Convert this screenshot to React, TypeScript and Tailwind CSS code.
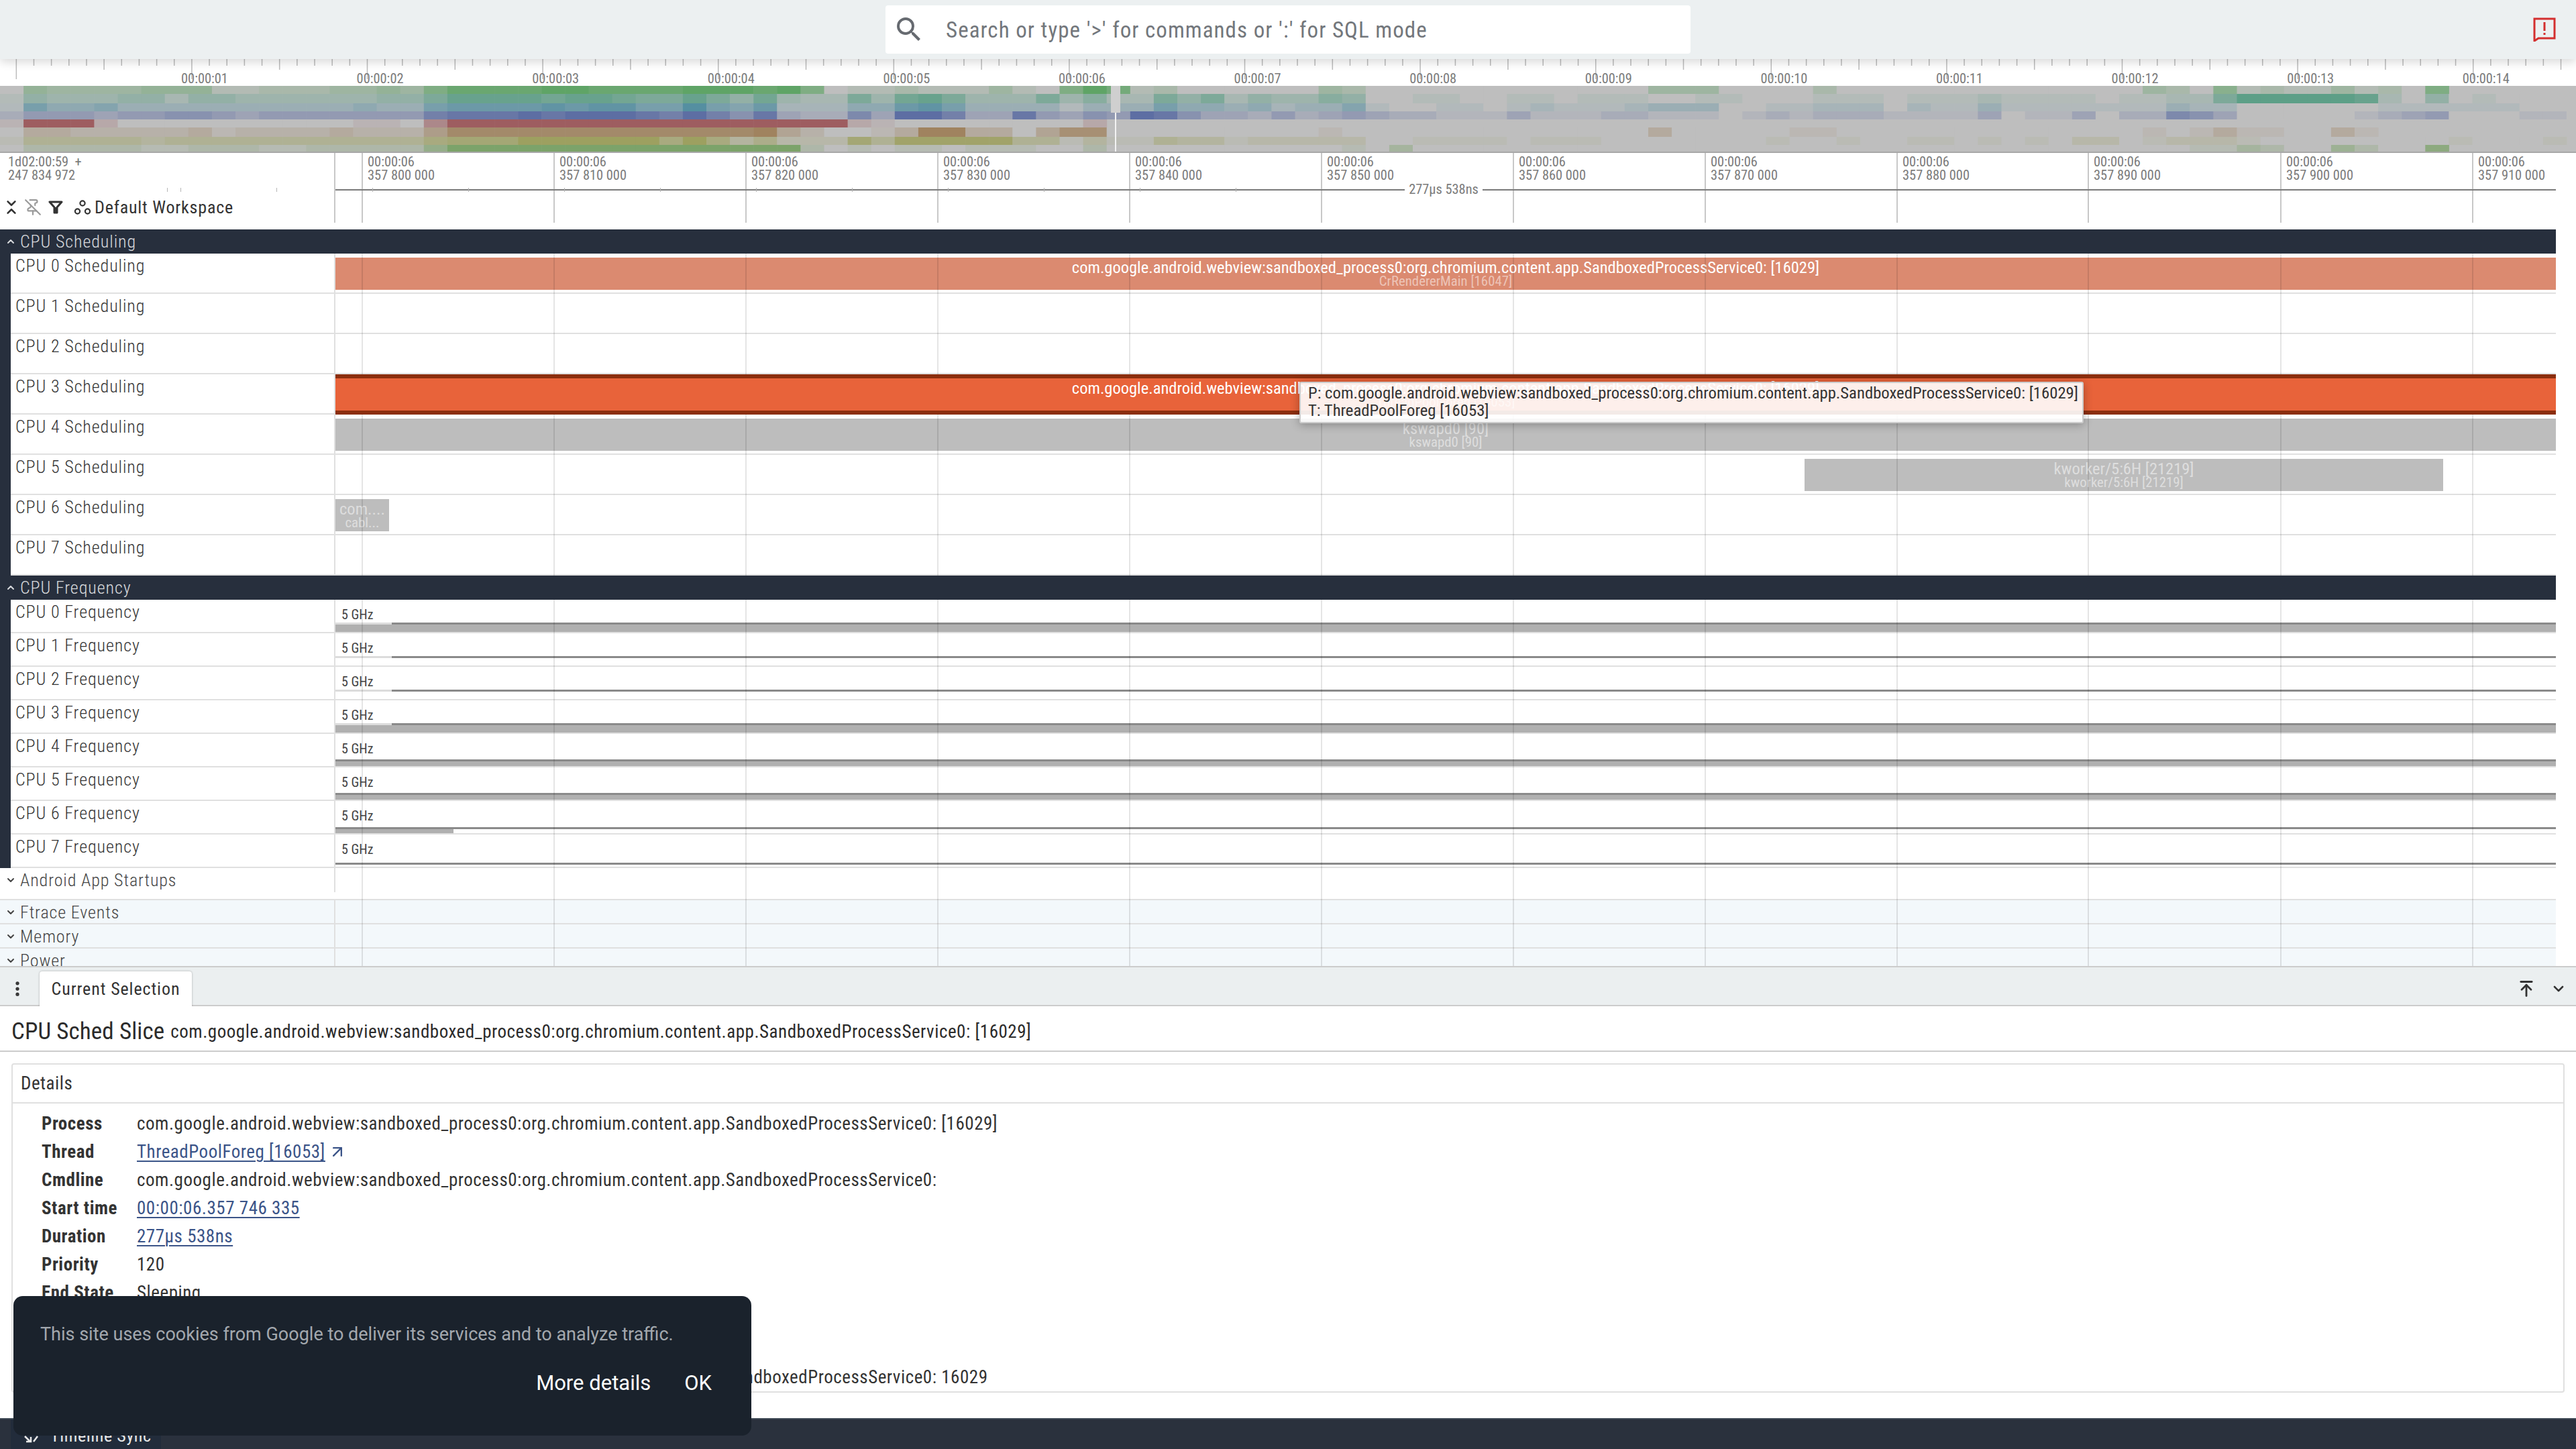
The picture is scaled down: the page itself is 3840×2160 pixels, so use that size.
import { ArrowUpRight, ArrowUpToLine, ChevronDown, ChevronUp, ChevronsDownUp, EllipsisVertical, PinOff } from "lucide-react";

const FONT = "font-['Roboto','Liberation_Sans',sans-serif]";
const z = (n: number) => "0".repeat(n);

// overview heat map: one digit per 35px column, 0 = grey, 9 = full colour
const HEAT: { color: number[]; y: number; h: number; data: string }[] = [
  { color: [95, 164, 102], y: 0, h: 12, data: "0" + "4" + "3333" + "444" + "11" + "222" + "33" + "43" + "6" + "888899888899989" + "601" + "1211131069712" + z(6) + "32" + z(12) + "3330" + z(3) + "2" + z(13) + "320" + "5121131206" },
  { color: [93, 159, 135], y: 12, h: 14, data: "1" + "4333" + "44" + "2" + "44333333" + "44" + "6" + "88887887" + "66" + "8" + "6" + "4" + "7" + "322" + "6" + "378633363522646243354" + "0011001101110011" + "000" + "111" + "0111211110" + "1122" + "6" + "99999" + "8204010000" },
  { color: [85, 143, 161], y: 26, h: 12, data: "1" + "6" + "44" + "5" + "3333" + "3333" + "33" + "43" + "3" + "6" + "77778788" + "66" + "9" + "6" + "5" + "7" + "222" + "4" + "478633331333644342335" + "1001101" + "2" + "111" + "2" + "333" + "0" + "011" + "222" + "0" + "2" + "11" + "3" + "1111111" + "322" + z(6) + "1111" + "1100" + "0" },
  { color: [93, 110, 163], y: 38, h: 12, data: "2444344554344444447888989998" + "79758322" + "6" + "399733843549853324234" + "3" + "22" + "111" + "3" + "111" + "22" + "111" + "0" + "121222" + "1111" + "30" + "11" + "30" + "22" + "653" + z(5) + "1234" + "000" + "110" },
  { color: [158, 93, 96], y: 50, h: 12, data: "1" + "999" + "2" + z(10) + "110" + "5" + "9".repeat(17) + "2" + "1" + z(8) + "2" },
  { color: [160, 131, 95], y: 62, h: 14, data: "0" + "33222223122223222" + "5" + "8".repeat(13) + "9" + "42" + "00" + "1399330477" + z(9) + "10" + z(12) + "3" + z(5) + "11" + z(13) + "1013" + "11" + "00" + "31" },
  { color: [157, 160, 96], y: 76, h: 12, data: "1" + "44444344444444444" + "6" + "777" + "999999" + "69635" + "222" + "7" + "488888441311433122222" + "001111011100" + "0000" + "0100100110101" + "0" + "220" + "1" + "222" + "1" + z(8) + "1" + "000" + "1" },
  { color: [116, 160, 95], y: 88, h: 12, data: "0" + "22222112221122222" + "5" + "8".repeat(15) + "201" + "0110111002" + z(10) + "103" + z(33) + "1132" + "00" + "42" + "00" + "6" },
];

const mix = (c: number[], v: number) => {
  const t = v / 9;
  return `rgb(${c.map((x) => Math.round(190 + (x - 190) * t)).join(",")})`;
};

const GRID = [539, 825, 1111, 1397, 1683, 1969, 2255, 2541, 2827, 3112, 3399, 3685];
const TIMES = ["800", "810", "820", "830", "840", "850", "860", "870", "880", "890", "900", "910"];
const MINI_TICKS = [555, 698, 841, 984, 1127, 1270, 1413, 1556, 1699, 1842];

function TopBar() {
  return (
    <div className="relative z-20 flex h-[88px] items-center justify-center bg-[#ecf0f1] shadow-[0_4px_14px_rgba(0,0,0,0.16)]">
      <div className="flex h-[72px] w-[1200px] items-center rounded-[4px] bg-white pl-[11px]">
        <svg width="48" height="48" viewBox="0 0 24 24" fill="#666a70">
          <path d="M15.5 14h-.79l-.28-.27A6.471 6.471 0 0 0 16 9.5 6.5 6.5 0 1 0 9.5 16c1.61 0 3.09-.59 4.23-1.57l.27.28v.79l5 4.99L20.49 19l-4.99-5zm-6 0C7.01 14 5 11.99 5 9.5S7.01 5 9.5 5 14 7.01 14 9.5 11.99 14 9.5 14z" />
        </svg>
        <span className="ml-[31px] pt-[2px] text-[33px] tracking-[1.05px] text-[#73777c]">Search or type '&gt;' for commands or ':' for SQL mode</span>
      </div>
      <svg className="absolute right-[30px] top-[26px]" width="34" height="36" viewBox="0 0 34 36" fill="none">
        <path d="M2 2h30v29H8l-6 4z" stroke="#d32f2f" strokeWidth="3" />
        <path d="M17 7v13M17 23v3" stroke="#d32f2f" strokeWidth="3" />
      </svg>
    </div>
  );
}

function TimeRuler() {
  const ticks = Array.from({ length: 148 }, (_, i) => i);
  return (
    <div className="relative h-[40px] bg-white">
      <svg width="3840" height="40" className="block">
        {ticks.map((i) => {
          const x = 259 - 26.16 * 9 + 26.16 * i;
          const h = i % 10 === 0 ? 30 : i % 5 === 0 ? 16 : 10;
          return <rect key={i} x={x} y={0} width={1.5} height={h} fill="#bdbdbd" />;
        })}
        {Array.from({ length: 14 }, (_, i) => (
          <text key={i} x={270 + 261.6 * i} y={36} fontSize="20.4" fill="#7b7b7b" fontFamily="Roboto, sans-serif">
            {`00:00:${String(i + 1).padStart(2, "0")}`}
          </text>
        ))}
      </svg>
    </div>
  );
}

function Overview() {
  return (
    <div className="h-[100px] bg-[#bebebe]">
      <svg width="3840" height="100" className="block">
        {HEAT.map((row) =>
          Array.from(row.data).map((d, i) => (
            <rect key={`${row.y}-${i}`} x={i * 35.1} y={row.y} width={35.6} height={row.h} fill={mix(row.color, Number(d))} />
          ))
        )}
        <rect x="1656" y="0" width="14" height="40" fill="#cfcfcf" />
        <rect x="1662" y="40" width="2" height="60" fill="#f2f2f2" />
        <rect x="0" y="98" width="3840" height="2" fill="#a8a8a8" />
      </svg>
    </div>
  );
}

function TimelineHeader() {
  return (
    <div className="relative flex h-[104px] bg-white">
      <div className="flex w-[500px] shrink-0 flex-col justify-between border-r-2 border-[#c8c8c8]">
        <div className="pl-[12px] pt-[3px] text-[20.4px] leading-[20px] text-[#7b7b7b]">
          <div>1d02:00:59 &nbsp;+</div>
          <div>247 834 972</div>
        </div>
        <div className="mb-[7px] flex h-[32px] items-center pl-[4px] text-[#333]">
          <ChevronsDownUp className="size-[26px]" strokeWidth={2.4} />
          <PinOff className="ml-[6px] size-[26px] text-[#9a9a9a]" strokeWidth={2} />
          <svg className="ml-[10px]" width="22" height="22" viewBox="0 0 22 22">
            <path d="M2 3h18l-7 8v8h-4v-8z" fill="none" stroke="#333" strokeWidth="3" strokeLinejoin="round" />
            <path d="M9 11h4v8H9z" fill="#333" />
          </svg>
          <svg className="ml-[16px]" width="26" height="24" viewBox="0 0 26 24" fill="none" stroke="#333" strokeWidth="2.2">
            <circle cx="13" cy="6" r="3.6" />
            <circle cx="5.5" cy="18" r="3.6" />
            <circle cx="20.5" cy="18" r="3.6" />
          </svg>
          <span className="ml-[5px] text-[26px] tracking-[0.8px]">Default Workspace</span>
        </div>
      </div>
      <div className="relative flex-1">
        {GRID.map((x, i) => (
          <div key={x} className="absolute bottom-0 top-0 w-[2px] bg-[#c8c8c8]" style={{ left: x - 500 }}>
            <div className="absolute left-[9px] top-[3px] whitespace-nowrap text-[20.4px] leading-[20px] text-[#7b7b7b]">
              <div>00:00:06</div>
              <div>357 {TIMES[i]} 000</div>
            </div>
          </div>
        ))}
        <div className="absolute left-0 right-[30px] top-[54px] h-[2px] bg-[#7a7a7a]" />
        {MINI_TICKS.map((x) => (
          <div key={x} className="absolute top-[52px] h-[6px] w-[1px] bg-[#b5b5b5]" style={{ left: x - 500 }} />
        ))}
        <div className="absolute left-[1594px] top-[44px] w-[116px] bg-white text-center text-[20.4px] leading-[20px] text-[#7b7b7b]">277µs 538ns</div>
      </div>
      <div className="absolute left-[249px] top-[52px] h-[6px] w-[1px] bg-[#b5b5b5]" />
      <div className="absolute left-[269px] top-[52px] h-[6px] w-[1px] bg-[#b5b5b5]" />
      <div className="absolute left-[412px] top-[52px] h-[6px] w-[1px] bg-[#b5b5b5]" />
    </div>
  );
}

function GroupHeader({ title }: { title: string }) {
  return (
    <div className="relative z-10 flex h-[36px] items-center bg-[#272f3d] pl-[8px] text-[26px] font-light tracking-[0.9px] text-[#d8dadd]">
      <ChevronUp className="size-[16px]" strokeWidth={3} />
      <span className="ml-[6px]">{title}</span>
    </div>
  );
}

function Track({ title, height, children }: { title: string; height: string; children?: React.ReactNode }) {
  return (
    <div className={`flex ${height} border-b-2 border-[#e0e0e0] bg-white`}>
      <div className="w-[484px] shrink-0 border-r-2 border-[#e0e0e0] pl-[7px] pt-[3px] text-[26px] font-light leading-[30px] tracking-[0.9px] text-[#333]">{title}</div>
      <div className="relative flex-1">{children}</div>
    </div>
  );
}

function Slice({ left, width, bg, title, sub, titleColor = "text-white", subColor = "text-white/50" }: { left: number; width: number; bg: string; title: string; sub: string; titleColor?: string; subColor?: string }) {
  return (
    <div className={`absolute top-[6px] h-[48px] overflow-hidden text-center ${bg}`} style={{ left, width }}>
      <div className={`pt-[4px] text-[24.5px] leading-[21px] ${titleColor}`}>{title}</div>
      <div className={`text-[20.8px] leading-[21px] ${subColor}`}>{sub}</div>
    </div>
  );
}

function FreqTrack({ n, lineY, fill, fillWidth, lineLeft = 84 }: { n: number; lineY: number; fill?: boolean; fillWidth?: number; lineLeft?: number }) {
  return (
    <Track title={`CPU ${n} Frequency`} height="h-[50px]">
      <div className="absolute left-[9px] top-[11px] text-[20px] leading-[22px] text-[#444]">5 GHz</div>
      <div className="absolute left-0 h-[3px] bg-[#dcdcdc]" style={{ top: lineY, width: lineLeft }} />
      <div className="absolute right-0 h-[3px] bg-[#8a8a8a]" style={{ top: lineY, left: lineLeft }} />
      {fill && <div className="absolute bottom-0 left-0 bg-[#b0b0b0]" style={{ top: lineY + 3, width: fillWidth ?? "100%" }} />}
    </Track>
  );
}

function Tracks() {
  return (
    <div className="relative mt-[10px] h-[1098px] w-[3810px] overflow-hidden">
      <GroupHeader title="CPU Scheduling" />
      <div className="border-l-[16px] border-[#272f3d]">
        <Track title="CPU 0 Scheduling" height="h-[60px]">
          <Slice left={0} width={3310} bg="bg-[#db8a70]" title="com.google.android.webview:sandboxed_process0:org.chromium.content.app.SandboxedProcessService0: [16029]" sub="CrRendererMain [16047]" />
        </Track>
        <Track title="CPU 1 Scheduling" height="h-[60px]" />
        <Track title="CPU 2 Scheduling" height="h-[60px]" />
        <Track title="CPU 3 Scheduling" height="h-[60px]">
          <div className="absolute inset-x-0 top-0 z-10 h-[60px] overflow-hidden border-y-[6px] border-[#8b2e0e] bg-[#e8633a] text-center">
            <div className="pt-[4px] text-[24.5px] leading-[21px] text-white">com.google.android.webview:sandboxed_process0:org.chromium.content.app.SandboxedProcessService0: [16029]</div>
            <div className="text-[20.8px] leading-[21px] text-white/50">ThreadPoolForeg [16053]</div>
          </div>
        </Track>
        <Track title="CPU 4 Scheduling" height="h-[60px]">
          <Slice left={0} width={3310} bg="bg-[#bdbdbd]" title="kswapd0 [90]" sub="kswapd0 [90]" titleColor="text-white/50" />
        </Track>
        <Track title="CPU 5 Scheduling" height="h-[60px]">
          <Slice left={2190} width={952} bg="bg-[#bdbdbd]" title="kworker/5:6H [21219]" sub="kworker/5:6H [21219]" titleColor="text-white/50" />
        </Track>
        <Track title="CPU 6 Scheduling" height="h-[60px]">
          <Slice left={0} width={80} bg="bg-[#bdbdbd]" title="com...." sub="cabl..." titleColor="text-white/50" />
        </Track>
        <Track title="CPU 7 Scheduling" height="h-[60px]" />
      </div>
      <GroupHeader title="CPU Frequency" />
      <div className="border-l-[16px] border-[#272f3d]">
        <FreqTrack n={0} lineY={34} fill />
        <FreqTrack n={1} lineY={34} />
        <FreqTrack n={2} lineY={34} />
        <FreqTrack n={3} lineY={34} fill />
        <FreqTrack n={4} lineY={38} fill lineLeft={0} />
        <FreqTrack n={5} lineY={38} fill lineLeft={0} />
        <FreqTrack n={6} lineY={39} fill fillWidth={176} lineLeft={0} />
        <FreqTrack n={7} lineY={42} lineLeft={0} />
      </div>
      {[
        { t: "Android App Startups", h: "h-[48px]", bg: "bg-white" },
        { t: "Ftrace Events", h: "h-[36px]", bg: "bg-[#f3f8fb]" },
        { t: "Memory", h: "h-[36px]", bg: "bg-[#f3f8fb]" },
        { t: "Power", h: "h-[36px]", bg: "bg-[#f3f8fb]" },
      ].map((g) => (
        <div key={g.t} className={`flex ${g.h} border-b-2 border-[#e0e0e0] ${g.bg}`}>
          <div className="flex h-[36px] w-[500px] shrink-0 items-center border-r-2 border-[#e0e0e0] pl-[8px] text-[26px] font-light tracking-[0.9px] text-[#444]">
            <ChevronDown className="size-[16px]" strokeWidth={3} />
            <span className="ml-[6px]">{g.t}</span>
          </div>
        </div>
      ))}
      {GRID.map((x) => (
        <div key={x} className="absolute bottom-0 top-[36px] w-[2px] bg-black/10" style={{ left: x }} />
      ))}
    </div>
  );
}

function TabBar() {
  return (
    <div className="flex h-[60px] items-end justify-between border-y-2 border-[#ccc] bg-[#ebeff0]">
      <div className="flex items-end">
        <div className="mb-[10px] flex w-[52px] justify-center text-[#333]">
          <EllipsisVertical className="size-[28px]" strokeWidth={2.5} />
        </div>
        <div className="-mb-[2px] ml-[7px] flex h-[52px] w-[227px] items-center justify-center rounded-t-[4px] bg-white text-[26px] tracking-[0.9px] text-[#333] shadow-[0_0_3px_rgba(0,0,0,0.3)]">Current Selection</div>
      </div>
      <div className="mb-[10px] flex items-center text-[#333]">
        <ArrowUpToLine className="size-[28px]" strokeWidth={2.4} />
        <ChevronDown className="ml-[22px] mr-[14px] size-[24px]" strokeWidth={2.6} />
      </div>
    </div>
  );
}

const ROWS: { label: string; value?: string; link?: boolean }[] = [
  { label: "Process", value: "com.google.android.webview:sandboxed_process0:org.chromium.content.app.SandboxedProcessService0: [16029]" },
  { label: "Thread", value: "ThreadPoolForeg [16053]", link: true },
  { label: "Cmdline", value: "com.google.android.webview:sandboxed_process0:org.chromium.content.app.SandboxedProcessService0:" },
  { label: "Start time", value: "00:00:06.357 746 335", link: true },
  { label: "Duration", value: "277µs 538ns", link: true },
  { label: "Priority", value: "120" },
  { label: "End State", value: "Sleeping" },
  { label: "" },
  { label: "" },
  { label: "", value: "com.google.android.webview:sandboxed_process0:org.chromium.content.app.SandboxedProcessService0: 16029" },
];

function DetailsPanel() {
  return (
    <div className="flex-1 overflow-hidden bg-white">
      <div className="flex h-[68px] items-center border-b-2 border-[#ccc] pl-[17px] pt-[10px] text-[#2b2b2b]">
        <span className="text-[35px] tracking-[0.1px]">CPU Sched Slice</span>
        <span className="ml-[9px] text-[27px] tracking-[0.53px]">com.google.android.webview:sandboxed_process0:org.chromium.content.app.SandboxedProcessService0: [16029]</span>
      </div>
      <div className="mx-[17px] mt-[17px] rounded-[4px] border-2 border-[#e0e0e0]">
        <div className="flex h-[58px] items-center border-b-2 border-[#e0e0e0] pl-[12px] text-[27px] tracking-[0.5px] text-[#333]">Details</div>
        <div className="pl-[43px] pt-[9px] text-[27px] tracking-[0.53px] text-[#333]">
          {ROWS.map((r, i) => (
            <div key={i} className="flex h-[42px] items-center">
              <div className="w-[142px] shrink-0 font-bold">{r.label}</div>
              {r.link ? (
                <span className="text-[#3b5488] underline decoration-2 underline-offset-4">{r.value}</span>
              ) : (
                <span>{r.value}</span>
              )}
              {r.label === "Thread" && <ArrowUpRight className="ml-[4px] size-[28px] text-[#3b5488]" />}
            </div>
          ))}
        </div>
      </div>
    </div>
  );
}

function CookieToast() {
  return (
    <div className="absolute bottom-[20px] left-[20px] z-30 h-[208px] w-[1100px] rounded-[14px] bg-[#1a222c] px-[40px] pt-[40px] [font-stretch:100%]">
      <div className="text-[27px] leading-[34px] text-[#a3a8ae]">This site uses cookies from Google to deliver its services and to analyze traffic.</div>
      <div className="mt-[36px] flex justify-end gap-[50px] pr-[19px] text-[31px] leading-[40px] text-white">
        <span>More details</span>
        <span>OK</span>
      </div>
    </div>
  );
}

function Tooltip() {
  return (
    <div className="absolute left-[1937px] top-[569px] z-30 h-[62px] w-[1169px] whitespace-nowrap rounded-[3px] border-2 border-[#ccc] bg-white/90 pl-[11px] pt-[2px] text-[24.7px] leading-[26px] text-[#333] shadow-[0_2px_14px_rgba(0,0,0,0.3)]">
      <div>P: com.google.android.webview:sandboxed_process0:org.chromium.content.app.SandboxedProcessService0: [16029]</div>
      <div>T: ThreadPoolForeg [16053]</div>
    </div>
  );
}

export default function App() {
  return (
    <div className={`relative flex h-[2160px] w-[3840px] flex-col overflow-hidden bg-white [font-stretch:75%] ${FONT}`}>
      <TopBar />
      <TimeRuler />
      <Overview />
      <TimelineHeader />
      <Tracks />
      <TabBar />
      <DetailsPanel />
      <div className="flex h-[46px] border-t-2 border-[#3b4652] bg-[#2a313d] pl-[16px] text-[26px] tracking-[0.6px] text-[#e8e8e8]">
        <div className="flex w-[224px] items-center bg-[#222c3b] pl-[20px] pt-[4px]">
          <svg width="22" height="22" viewBox="0 0 22 22" fill="none" stroke="#e8e8e8" strokeWidth="2.5">
            <path d="M1 12l8 8M3 20h7v-7M14 20l6-8" />
          </svg>
          <span className="ml-[17px]">Timeline Sync</span>
        </div>
      </div>
      <Tooltip />
      <CookieToast />
    </div>
  );
}
